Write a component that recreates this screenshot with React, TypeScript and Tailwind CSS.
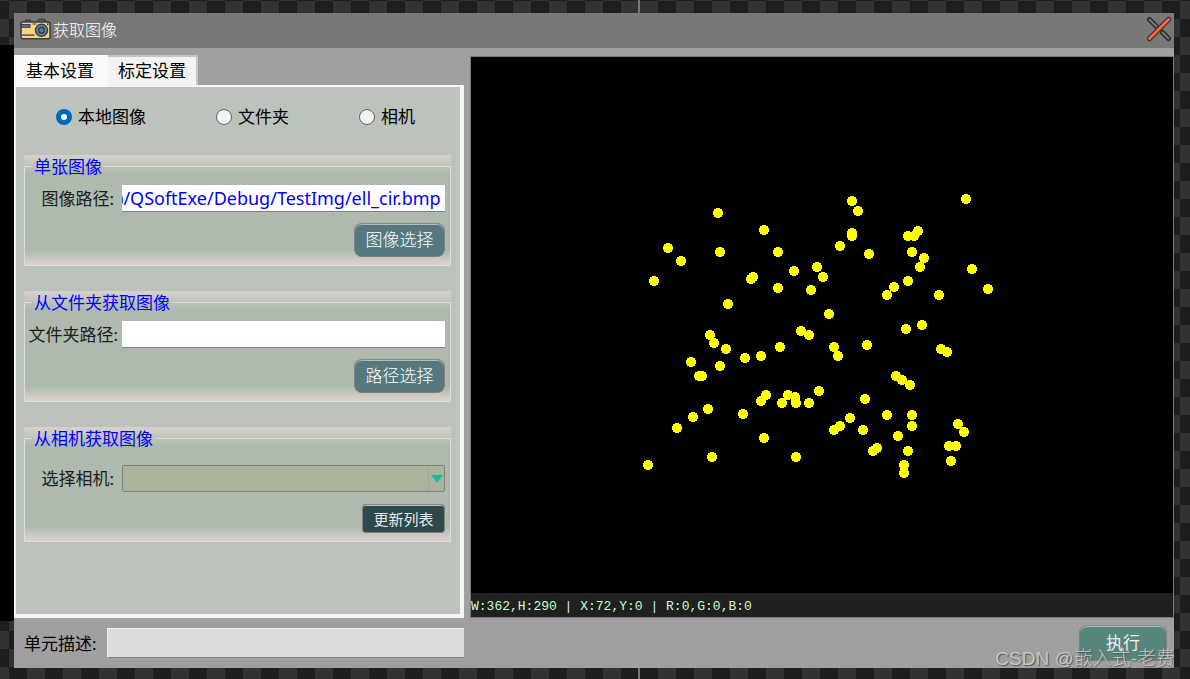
import React, {useEffect, useRef, useState} from 'react';

const DOTS: [number, number][] = [
    [247, 156], [293, 173], [197, 191], [210, 204], [249, 195], [307, 195], [183, 224], [282, 220],
    [280, 222], [323, 214], [307, 231], [340, 233], [257, 247], [239, 278], [243, 286], [255, 292],
    [274, 301], [290, 299], [309, 290], [330, 274], [338, 278], [220, 305], [249, 309], [228, 319],
    [231, 319], [295, 338], [290, 344], [317, 338], [324, 340], [325, 346], [311, 346], [338, 346],
    [237, 352], [222, 360], [272, 357], [206, 371], [293, 381], [241, 400], [177, 408], [325, 400],
    [381, 144], [387, 154], [495, 142], [381, 176], [381, 179], [369, 189], [398, 197], [447, 174],
    [437, 179], [443, 179], [441, 195], [453, 201], [449, 210], [501, 212], [346, 210], [352, 220],
    [437, 224], [423, 230], [416, 238], [468, 238], [517, 232], [358, 257], [435, 272], [451, 268],
    [363, 290], [367, 299], [396, 288], [470, 292], [476, 295], [425, 319], [431, 323], [439, 328],
    [348, 334], [394, 342], [416, 358], [441, 358], [441, 369], [379, 361], [369, 369], [363, 373],
    [392, 373], [427, 379], [406, 391], [402, 394], [437, 394], [433, 408], [433, 416], [487, 367],
    [493, 375], [478, 389], [485, 389], [480, 404],
];

const SOURCES = ['本地图像', '文件夹', '相机'];

const CameraIcon: React.FC = () => (
    <svg className="w-8 h-6 shrink-0" viewBox="0 0 32 24" aria-hidden="true">
        <path d="M5.5 4.5V2.3h5v2.2M17.5 4l1.5-2.6h5.5L26 4" fill="#4b7ba6" stroke="#3a3f44" strokeWidth="1.5" strokeLinejoin="round"/>
        <rect x="1" y="4" width="29" height="16.8" rx="2" fill="#fcd283" stroke="#3a3f44" strokeWidth="1.5"/>
        <rect x="1.2" y="6.5" width="8.8" height="2.8" fill="#4b7ba6" stroke="#3a3f44"/>
        <path d="M12.5 6h4M2 17.2h12.5" stroke="#3a3f44" strokeWidth="1.2"/>
        <circle cx="21.5" cy="12.3" r="6" fill="#5b8db8" stroke="#3a3f44" strokeWidth="1.4"/>
        <circle cx="21.5" cy="12.3" r="3" fill="#4b7ba6" stroke="#3a3f44" strokeWidth="1.4"/>
        <path d="M27 5.2h1.5v2H27z" fill="#3a3f44"/>
    </svg>
);

const CloseIcon: React.FC = () => (
    <svg className="w-7 h-7" viewBox="0 0 28 28" fill="none" strokeLinecap="round" aria-hidden="true">
        <path d="M4.5 3.5l7 7M17.5 16.5l6 6" stroke="#2b2b2b" strokeWidth="5"/>
        <path d="M4.5 3.5l7 7M17.5 16.5l6 6" stroke="#787878" strokeWidth="2"/>
        <path d="M23.5 3.5l-19 19" stroke="#2b2b2b" strokeWidth="5"/>
        <path d="M23.5 3.5l-19 19" stroke="#ff6243" strokeWidth="3"/>
    </svg>
);

interface GroupProps {
    title: string;
    children: React.ReactNode;
}

const Group: React.FC<GroupProps> = ({title, children}) => (
    <div className="bg-[linear-gradient(to_bottom,#dad1cc_0,#adbaad_18px,#adbaad_calc(100%_-_16px),#d8d0cb_calc(100%_-_3px))]">
        <fieldset className="border border-[#dcdcdc] min-w-0 pl-px pr-[5px] pb-2">
            <legend className="ml-[6px] px-[2px] leading-[23px] text-[#0000ff]">{title}</legend>
            {children}
        </fieldset>
    </div>
);

const raised = 'border border-[#808080] border-t-[#888888] shadow-[inset_0_1px_0_#b8bcbc]';

const App: React.FC = () => {
    const [source, setSource] = useState(SOURCES[0]);
    const [path, setPath] = useState(')/QSoftExe/Debug/TestImg/ell_cir.bmp');
    const pathRef = useRef<HTMLInputElement>(null);

    // keep the file name at the end of the path in view
    useEffect(() => {
        if (pathRef.current) {
            pathRef.current.scrollLeft = pathRef.current.scrollWidth;
        }
    }, [path]);

    return (
        <div className="relative min-h-screen flex flex-col pt-[13px] pr-4 pb-[11px] pl-[14px] bg-[#1e1e1e] text-[17px] leading-6 text-black font-[Noto_Sans,Noto_Sans_CJK_SC,sans-serif]">
            <div className="absolute inset-0 flex" aria-hidden="true">
                <div className="w-[638px] bg-[conic-gradient(#1e1e1e_25%,#323232_0_50%,#1e1e1e_0_75%,#323232_0)] bg-[length:36px_36px] bg-[position:9px_1px]"/>
                <div className="w-[2px] bg-[#77777d]"/>
                <div className="flex-1 bg-[conic-gradient(#1e1e1e_25%,#323232_0_50%,#1e1e1e_0_75%,#323232_0)] bg-[length:36px_36px] bg-[position:0px_1px]"/>
            </div>
            <div className="absolute left-0 top-[45px] bottom-[58px] w-[14px] bg-black" aria-hidden="true"/>

            <div className="relative flex-1 flex flex-col bg-[#a0a0a0]">
                <header className="flex items-center h-[35px] pl-[6px] pr-px pb-px bg-[#787878] text-white">
                    <CameraIcon/>
                    <h1 className="flex-1 pl-px text-base font-light">获取图像</h1>
                    <button type="button" aria-label="关闭"><CloseIcon/></button>
                </header>

                <main className="flex-1 flex gap-[6px]">
                    <section className="w-[450px] shrink-0 flex flex-col pt-[7px]">
                        <div className="flex items-end h-[30px]" role="tablist">
                            <button type="button" role="tab" aria-selected="true" className="w-[94px] h-8 -mb-[2px] relative pr-[2px] bg-[#f9f9f9]">基本设置</button>
                            <button type="button" role="tab" aria-selected="false" className="w-[90px] h-[30px] bg-[#f3f3f3] border-t-2 border-r-2 border-[#c0c8c0]">标定设置</button>
                        </div>
                        <div className="flex-1 flex flex-col gap-[25px] bg-[#bbc3bc] border-2 border-r-4 border-b-4 border-[#f5f5f5] pt-4 pl-2 pr-[9px]">
                            <div className="flex gap-[70px] pl-8 h-[27px]" role="radiogroup" aria-label="图像来源">
                                {SOURCES.map((s) => (
                                    <label key={s} className="flex items-center gap-[6px]">
                                        <input
                                            type="radio"
                                            name="source"
                                            checked={source === s}
                                            onChange={() => setSource(s)}
                                            className="appearance-none size-4 rounded-full border border-[#606060] bg-[#f3f3f3] checked:border-[5px] checked:border-[#0067c0] checked:bg-white"
                                        />
                                        {s}
                                    </label>
                                ))}
                            </div>

                            <Group title="单张图像">
                                <div className="flex items-center mt-[7px]">
                                    <label htmlFor="image-path" className="w-24 shrink-0 pr-2 text-right text-[#1e1e1e]">图像路径:</label>
                                    <input
                                        id="image-path"
                                        ref={pathRef}
                                        value={path}
                                        onChange={(e) => setPath(e.target.value)}
                                        className="flex-1 min-w-0 h-[27px] pr-1 bg-white border-b border-[#808080] text-lg text-right text-[#0000ff]"
                                    />
                                </div>
                                <div className="flex justify-end mt-[11px]">
                                    <button type="button" className={`w-[91px] h-[34px] rounded-lg font-light text-white bg-[#55797e] ${raised}`}>图像选择</button>
                                </div>
                            </Group>

                            <Group title="从文件夹获取图像">
                                <div className="flex items-center mt-[7px]">
                                    <label htmlFor="folder-path" className="w-24 shrink-0 pr-1 text-right whitespace-nowrap text-[#1e1e1e]">文件夹路径:</label>
                                    <input id="folder-path" className="flex-1 min-w-0 h-[27px] px-1 bg-white border-b border-[#808080] text-lg text-[#0000ff]"/>
                                </div>
                                <div className="flex justify-end mt-[11px]">
                                    <button type="button" className={`w-[91px] h-[34px] rounded-lg font-light text-white bg-[#55797e] ${raised}`}>路径选择</button>
                                </div>
                            </Group>

                            <Group title="从相机获取图像">
                                <div className="flex items-center mt-[15px]">
                                    <label htmlFor="camera" className="w-24 shrink-0 pr-2 text-right text-[#1e1e1e]">选择相机:</label>
                                    <div className="relative flex-1">
                                        <select id="camera" className="block appearance-none w-full h-[27px] px-1 rounded-xs bg-[#abb39b] border border-[#808080]"/>
                                        <div className="absolute right-px inset-y-px w-4 flex items-center justify-center border-l border-[#a0a5a0] pointer-events-none">
                                            <svg className="w-3 h-2" viewBox="0 0 12 8" aria-hidden="true"><path d="M0 0h12L6 8z" fill="#1abc9c"/></svg>
                                        </div>
                                    </div>
                                </div>
                                <div className="flex justify-end mt-3">
                                    <button type="button" className={`w-[83px] h-[29px] rounded-sm text-[15px] text-[#e8e8e8] bg-[#2c4a4b] ${raised}`}>更新列表</button>
                                </div>
                            </Group>
                        </div>
                    </section>

                    <section className="flex-1 min-w-0 flex flex-col mt-2 border border-[#787882] bg-black">
                        <div className="flex-1 min-h-0">
                            <svg className="w-full h-full" viewBox="0 0 702 536" role="img" aria-label="ell_cir.bmp" shapeRendering="crispEdges">
                                {DOTS.map(([x, y]) => (
                                    <circle key={`${x}-${y}`} cx={x} cy={y} r={5} fill="#ffff00"/>
                                ))}
                            </svg>
                        </div>
                        <p className="h-6 bg-[#202020] text-[#c8ffc8] text-[13px] leading-[28px] whitespace-pre font-[Liberation_Mono,monospace]">W:362,H:290 | X:72,Y:0 | R:0,G:0,B:0</p>
                    </section>
                </main>

                <footer className="flex items-center h-[50px] pl-[10px] pr-[7px]">
                    <label htmlFor="unit-desc" className="w-[83px] pt-[2px]">单元描述:</label>
                    <input id="unit-desc" className="w-[357px] h-[30px] px-1 bg-[#dcdcdc] border-t border-l border-b border-t-[#f0f0f0] border-l-[#f0f0f0] border-b-[#808080]"/>
                    <button type="button" className={`ml-auto w-[88px] h-9 rounded-lg text-[#f0f0f0] bg-[#56857c] ${raised}`}>执行</button>
                </footer>
            </div>

            <span className="absolute right-[15px] bottom-2 text-[19px] leading-6 font-light text-[#d0d0d0]/90 [text-shadow:1px_1px_1px_#555] font-[Liberation_Sans,Noto_Sans_CJK_SC,sans-serif] pointer-events-none">CSDN @嵌入式-老费</span>
        </div>
    );
};

export default App;
